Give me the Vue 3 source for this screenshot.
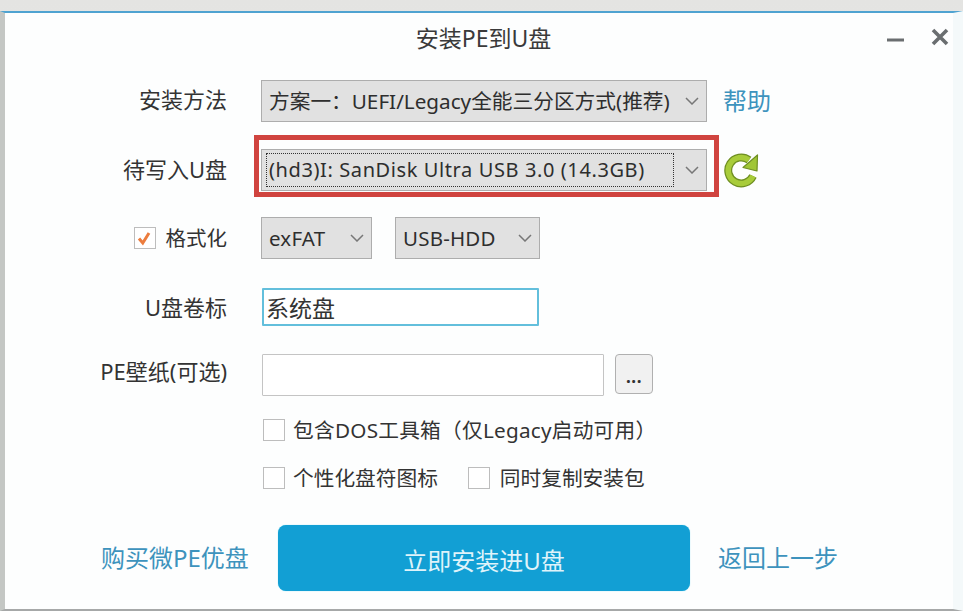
<script setup>
</script>

<template>
  <div class="page">
    <main class="win">
      <header class="titlebar">
        <h1 class="title">安装PE到U盘</h1>
        <div class="winbtns">
          <svg class="min" width="22" height="6" viewBox="0 0 22 6"><path d="M3 3H20" /></svg>
          <svg class="close" width="18" height="18" viewBox="0 0 18 18"><path d="M2 2L16 16M16 2L2 16" /></svg>
        </div>
      </header>

      <div class="form">
        <div class="row r1">
          <span class="label">安装方法</span>
          <div class="select wide"><span class="val main">方案一：UEFI/Legacy全能三分区方式(推荐)</span><svg class="chev" width="14" height="8" viewBox="0 0 14 8"><path d="M1 1L7 7L13 1" /></svg></div>
          <a class="link help">帮助</a>
        </div>

        <div class="row r2">
          <span class="label">待写入U盘</span>
          <div class="focus-wrap">
            <div class="select wide"><span class="val dotted">(hd3)I: SanDisk Ultra USB 3.0 (14.3GB)</span><svg class="chev" width="14" height="8" viewBox="0 0 14 8"><path d="M1 1L7 7L13 1" /></svg></div>
            <div class="redbox"></div>
          </div>
          <svg class="refresh" width="36" height="36" viewBox="0 0 36 36">
            <path class="arc-o" d="M26 8 A13 13 0 1 0 30 24" />
            <path class="arc-i" d="M26 8 A13 13 0 1 0 30 24" />
            <path class="head" d="M34.5 3 L34 19 L20 15.5 Z" />
          </svg>
        </div>

        <div class="row r3">
          <span class="label check-label">
            <span class="box checked"><svg width="18" height="18" viewBox="0 0 18 18"><path d="M4 9.5L7.8 14L14 4" /></svg></span>
            格式化
          </span>
          <div class="select fmt"><span class="val small">exFAT</span><svg class="chev" width="14" height="8" viewBox="0 0 14 8"><path d="M1 1L7 7L13 1" /></svg></div>
          <div class="select mode"><span class="val small">USB-HDD</span><svg class="chev" width="14" height="8" viewBox="0 0 14 8"><path d="M1 1L7 7L13 1" /></svg></div>
        </div>

        <div class="row r4">
          <span class="label">U盘卷标</span>
          <div class="input active">系统盘</div>
        </div>

        <div class="row r5">
          <span class="label">PE壁纸(可选)</span>
          <div class="input wall"></div>
          <div class="dots">...</div>
        </div>

        <div class="row r6">
          <span class="label"></span>
          <span class="opt long"><span class="box"></span>包含DOS工具箱（仅Legacy启动可用）</span>
        </div>

        <div class="row r7">
          <span class="label"></span>
          <span class="opt"><span class="box"></span>个性化盘符图标</span>
          <span class="opt"><span class="box"></span>同时复制安装包</span>
        </div>
      </div>

      <footer class="foot">
        <a class="link buy">购买微PE优盘</a>
        <button class="install">立即安装进U盘</button>
        <a class="link back">返回上一步</a>
      </footer>
    </main>
  </div>
</template>

<style>
html, body { margin: 0; }
</style>

<style scoped>
.page {
  width: 963px;
  height: 611px;
  box-sizing: border-box;
  padding-top: 11px;
  background: linear-gradient(#e4e4e2, #efefed);
  font-family: "Noto Sans", "Noto Sans CJK SC", sans-serif;
  color: #333;
  overflow: hidden;
}
.win {
  height: 600px;
  box-sizing: border-box;
  background: #fdfefe;
  border-top: 2px solid #4fa3d1;
  border-left: 5px solid #c4c7c4;
  border-right: 10px solid #f4f9fa;
  border-bottom: 2px solid #a6a8a8;
  display: flex;
  flex-direction: column;
}
.titlebar {
  height: 67px;
  flex: none;
  display: flex;
  justify-content: center;
  position: relative;
}
.title {
  margin: 9px 0 0 9px;
  font-size: 23px;
  line-height: 32px;
  font-weight: 400;
  color: #3a3a3a;
}
.winbtns {
  position: absolute;
  right: 4px;
  top: 15px;
  display: flex;
  align-items: center;
  gap: 25px;
}
.winbtns path { fill: none; stroke: #6a6e70; }
.min path { stroke-width: 3; }
.close path { stroke-width: 3.6; }
.min { margin-top: 6px; }
.form { display: flex; flex-direction: column; }
.row { display: flex; align-items: center; }
.label {
  width: 222px;
  flex: none;
  margin-right: 34px;
  text-align: right;
  font-size: 22px;
  line-height: 30px;
  color: #333;
}
.r1 .label { margin-bottom: 4px; }
.r2 .label { margin-bottom: 2px; }
.r5 .label { margin-bottom: 8px; }
.r1 { height: 42px; }
.r2 { height: 42px; margin-top: 27px; }
.r3 { height: 42px; margin-top: 26px; }
.r4 { height: 38px; margin-top: 29px; }
.r5 { height: 42px; margin-top: 28px; }
.r6 { height: 24px; margin-top: 22px; }
.r7 { height: 24px; margin-top: 24px; }
.select {
  box-sizing: border-box;
  height: 42px;
  background: #e1e1e1;
  border: 1px solid #adadad;
  display: flex;
  align-items: center;
  justify-content: space-between;
  padding: 0 7px 0 7px;
}
.wide { width: 446px; }
.fmt { width: 111px; }
.mode { width: 145px; margin-left: 23px; }
.val { font-size: 20px; line-height: 28px; white-space: nowrap; color: #2e2e2e; }
.main { font-size: 20.7px; }
.val.small { font-size: 20.5px; letter-spacing: 0.2px; }
.dotted {
  outline: 1px dotted #333;
  flex: 1;
  margin: 0 12px 0 -2px;
  padding: 2px 0 2px 2px;
  letter-spacing: 0.6px;
}
.chev { flex: none; }
.chev path { fill: none; stroke: #777; stroke-width: 1.5; }
.link { color: #3d93bd; font-size: 24px; line-height: 30px; }
.help { margin-left: 16px; }
.focus-wrap { position: relative; }
.redbox {
  position: absolute;
  left: -7px;
  top: -14px;
  width: 465px;
  height: 62px;
  box-sizing: border-box;
  border: 5px solid #d0443f;
  pointer-events: none;
}
.refresh { margin-left: 16px; flex: none; }
.arc-o { fill: none; stroke: #6f8f22; stroke-width: 8; }
.arc-i { fill: none; stroke: #a8cc3a; stroke-width: 5.5; }
.head { fill: #a0c636; stroke: #6f8f22; stroke-width: 1.2; stroke-linejoin: round; }
.check-label { display: flex; justify-content: flex-end; align-items: center; gap: 10px; font-size: 20.5px; }
.box {
  box-sizing: border-box;
  width: 22px;
  height: 22px;
  flex: none;
  border: 1.5px solid #bdbdbd;
  background: #fff;
  display: block;
}
.box svg { display: block; margin: 0.5px; }
.box svg path { fill: none; stroke: #ec7c3d; stroke-width: 3; }
.input {
  box-sizing: border-box;
  background: #fff;
  border: 1px solid #c4c4c4;
  border-radius: 1px;
}
.active {
  width: 277px;
  height: 38px;
  margin-left: 1px;
  border: 2px solid #63bfdc;
  font-size: 23px;
  line-height: 36px;
  padding-left: 2px;
  color: #333;
}
.wall { width: 342px; height: 42px; margin-left: 1px; }
.dots {
  box-sizing: border-box;
  width: 38px;
  height: 40px;
  align-self: flex-start;
  margin-left: 11px;
  border: 1px solid #b0b0b0;
  border-radius: 4px;
  background: #f1f1f1;
  text-align: center;
  font-size: 17px;
  font-weight: 700;
  letter-spacing: 0.5px;
  line-height: 44px;
}
.opt {
  display: flex;
  align-items: center;
  gap: 8px;
  margin-left: 2px;
  font-size: 20.7px;
  line-height: 28px;
  white-space: nowrap;
  color: #333;
}
.long { letter-spacing: 0.25px; }
.opt + .opt { margin-left: 30px; gap: 10px; }
.foot {
  display: flex;
  align-items: center;
  margin-top: 35px;
  height: 66px;
}
.buy { width: 273px; padding-left: 96px; box-sizing: border-box; white-space: nowrap; }
.install {
  width: 412px;
  height: 66px;
  border: 0;
  border-radius: 8px;
  background: #129fd4;
  color: #dff3fa;
  font: inherit;
  font-size: 24px;
  padding: 2px 0 0;
  box-shadow: 0 0 1px #5fd3f0;
}
.back { margin-left: 28px; white-space: nowrap; }
</style>
